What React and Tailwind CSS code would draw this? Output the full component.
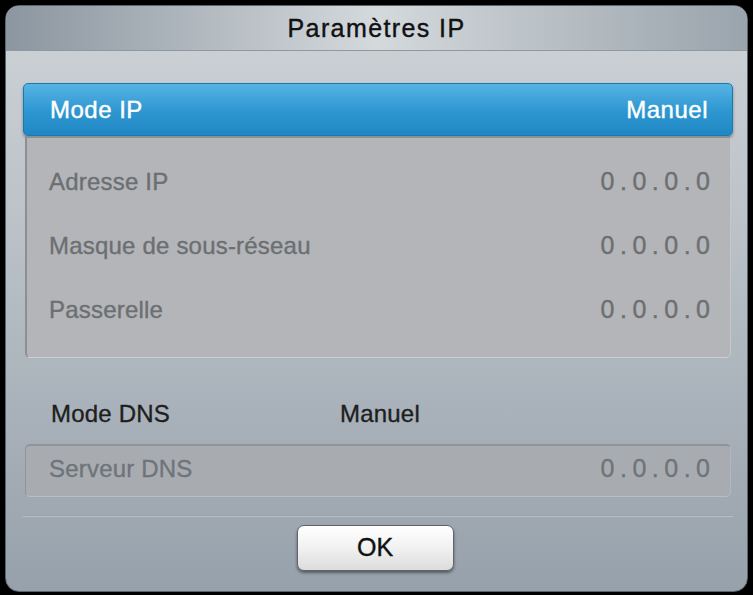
import React from 'react';

const ipRows = [
    { label: 'Adresse IP', value: '0.0.0.0' },
    { label: 'Masque de sous-réseau', value: '0.0.0.0' },
    { label: 'Passerelle', value: '0.0.0.0' },
];

const IpValue = ({ value }) => (
    <span className="text-[25px] tracking-[5.5px] -mr-[5.5px]">{value}</span>
);

const App = () => {
    return (
        <div className="w-[753px] h-[595px] bg-black p-[5px] font-['Liberation_Sans',Arial,sans-serif]">
            <div className="w-[743px] h-[587px] rounded-[14px] overflow-hidden flex flex-col border border-[#5d656c] bg-gradient-to-b from-[#ced3d7] via-[#b4bcc3] to-[#97a1ab] [-webkit-text-stroke:0.35px]">
                {/* Titre */}
                <div className="h-[45px] shrink-0 flex items-center justify-center border-b border-[#8f989f] bg-gradient-to-r from-[#8c96a0] via-[#d4d9dc] to-[#9aa4ac]">
                    <h1 className="text-[25px] tracking-[1.4px] text-[#111] pt-[2px] [-webkit-text-stroke:0.4px_#111]">Paramètres IP</h1>
                </div>

                <div className="flex-1 flex flex-col pl-[17px] pr-[14px] pt-[32px]">
                    {/* Mode IP (sélectionné) */}
                    <div className="h-[53px] shrink-0 rounded-[5px] flex items-center justify-between pl-[26px] pr-[24px] text-white text-[24px] tracking-[0.5px] border border-[#1d79ad] bg-gradient-to-b from-[#56b4e4] via-[#2f98d2] to-[#1f87c3] shadow-[0_2px_3px_rgba(0,0,0,0.35)] [-webkit-text-stroke:0.4px_#fff]">
                        <span>Mode IP</span>
                        <span>Manuel</span>
                    </div>

                    {/* Groupe IP */}
                    <div className="mx-[2px] h-[222px] shrink-0 rounded-b-[5px] bg-[#b3b5b8] border-l-2 border-t-2 border-[#8c8f93] border-r border-b border-r-[#c4c8cc] border-b-[#ccd1d6] pt-[12px] pl-[22px] pr-[20px] text-[#6c6f72] [-webkit-text-stroke:0.35px_#6c6f72]">
                        {ipRows.map((row) => (
                            <div key={row.label} className="h-[64px] flex items-center justify-between text-[24px] tracking-[0.2px]">
                                <span>{row.label}</span>
                                <IpValue value={row.value} />
                            </div>
                        ))}
                    </div>

                    {/* Mode DNS */}
                    <div className="mt-[36px] h-[40px] shrink-0 flex items-center pl-[28px] text-[24px] tracking-[0.2px] text-[#1e1e1e] [-webkit-text-stroke:0.35px_#1e1e1e]">
                        <span className="w-[289px]">Mode DNS</span>
                        <span>Manuel</span>
                    </div>

                    {/* Serveur DNS */}
                    <div className="mt-[10px] mx-[2px] h-[53px] shrink-0 rounded-[5px] bg-[#a8acb1] border-t-2 border-l border-[#8e949a] border-r border-b border-r-[#b2b8be] border-b-[#b7bec5] flex items-center justify-between pl-[23px] pr-[20px] pb-[4px] text-[#6f7479] [-webkit-text-stroke:0.35px_#6f7479]">
                        <span className="text-[24px] tracking-[0.2px]">Serveur DNS</span>
                        <IpValue value="0.0.0.0" />
                    </div>

                    {/* Séparateur */}
                    <div className="mt-[18px] h-[2px] shrink-0 border-t border-[#9aa3ac] border-b border-b-[#b6bec6]" />

                    {/* Bouton */}
                    <div className="flex justify-center mt-[8px] pr-[6px]">
                        <button className="w-[157px] h-[46px] rounded-[7px] border border-[#5f656b] bg-gradient-to-b from-[#ffffff] via-[#f1f1f1] to-[#dcdcdc] shadow-[0_2px_3px_rgba(0,0,0,0.45)] text-[25px] text-[#111] flex items-center justify-center [-webkit-text-stroke:0.4px_#111]">
                            OK
                        </button>
                    </div>
                </div>
            </div>
        </div>
    );
};

export default App;
